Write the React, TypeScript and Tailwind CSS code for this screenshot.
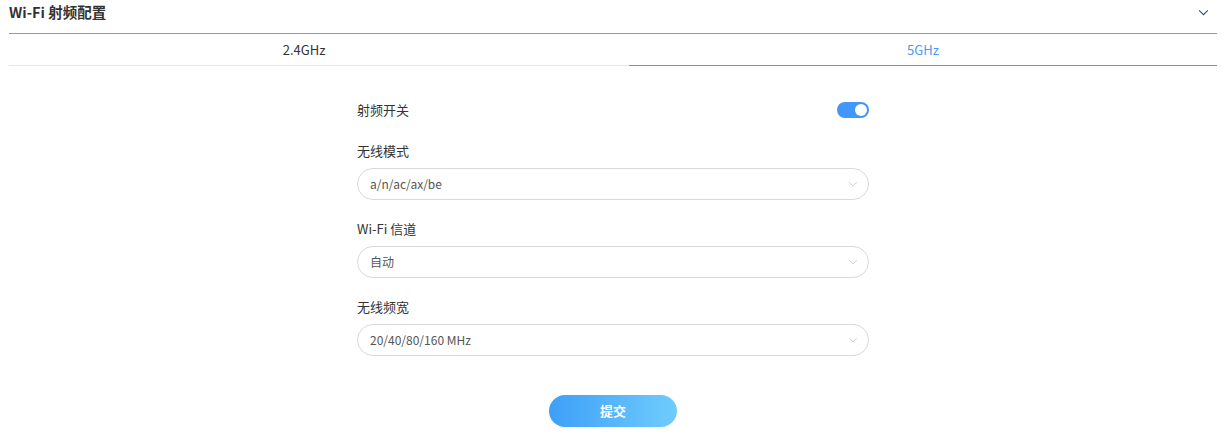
import React, { useState } from 'react';

const font = { fontFamily: '"Noto Sans CJK SC", "Noto Sans", sans-serif' };

const Chevron = ({ className }: { className?: string }) => (
  <svg viewBox="0 0 12 8" className={className} fill="none" stroke="currentColor" strokeWidth="1.2">
    <path d="M1 1.5 L6 6.5 L11 1.5" />
  </svg>
);

const SelectBox = ({ value }: { value: string }) => (
  <div className="flex h-8 w-full items-center justify-between rounded-full border border-[#d9d9d9] bg-white pl-3 pr-[10px]">
    <span className="text-[12px] text-[#555]">{value}</span>
    <Chevron className="h-[6px] w-[10px] text-[#c8c8c8]" />
  </div>
);

const Field = ({ label, value }: { label: string; value: string }) => (
  <div className="flex flex-col">
    <div className="text-[13px] leading-5 text-[#333]">{label}</div>
    <div className="mt-[7px]">
      <SelectBox value={value} />
    </div>
  </div>
);

export default function App() {
  const [tab, setTab] = useState<'2.4' | '5'>('5');
  const [on, setOn] = useState(true);

  return (
    <div className="h-[437px] w-[1222px] overflow-hidden bg-white" style={font}>
      <div className="flex h-[33px] items-start justify-between pl-[9px] pr-[13px] pt-[2px]">
        <span className="text-[14.5px] font-bold leading-5 text-[#333]">Wi-Fi 射频配置</span>
        <Chevron className="mt-[7px] h-[7px] w-[11px] text-[#34496b]" />
      </div>
      <div className="ml-[9px] mr-[5px] border-t border-[#999]">
        <div className="flex h-[32px]">
          <button
            onClick={() => setTab('2.4')}
            className={`flex w-[620px] items-center justify-center border-b pr-[30px] text-[13px] ${
              tab === '2.4' ? 'border-[#4a9af5] text-[#4a9af5]' : 'border-[#e6e6e6] text-[#333]'
            }`}
          >
            2.4GHz
          </button>
          <button
            onClick={() => setTab('5')}
            className={`flex flex-1 items-center justify-center border-b text-[13px] ${
              tab === '5' ? 'border-[#4a9af5] text-[#4a9af5]' : 'border-[#e6e6e6] text-[#333]'
            }`}
          >
            5GHz
          </button>
        </div>
      </div>

      <div className="ml-[357px] mt-[34px] w-[512px]">
        <div className="flex h-5 items-center justify-between">
          <span className="text-[13px] text-[#333]">射频开关</span>
          <button
            onClick={() => setOn(!on)}
            className={`flex h-4 w-8 items-center rounded-full px-[2px] ${
              on ? 'justify-end bg-[#4196f9]' : 'justify-start bg-[#ccc]'
            }`}
          >
            <span className="h-3 w-3 rounded-full bg-white" />
          </button>
        </div>
        <div className="mt-[21px] flex flex-col gap-[19px]">
          <Field label="无线模式" value="a/n/ac/ax/be" />
          <Field label="Wi-Fi 信道" value="自动" />
          <Field label="无线频宽" value="20/40/80/160 MHz" />
        </div>
        <div className="mt-[39px] flex justify-center">
          <button className="h-8 w-32 rounded-full bg-gradient-to-r from-[#3d9ff8] to-[#70ccfd] text-[13px] font-bold text-white">
            提交
          </button>
        </div>
      </div>
    </div>
  );
}
